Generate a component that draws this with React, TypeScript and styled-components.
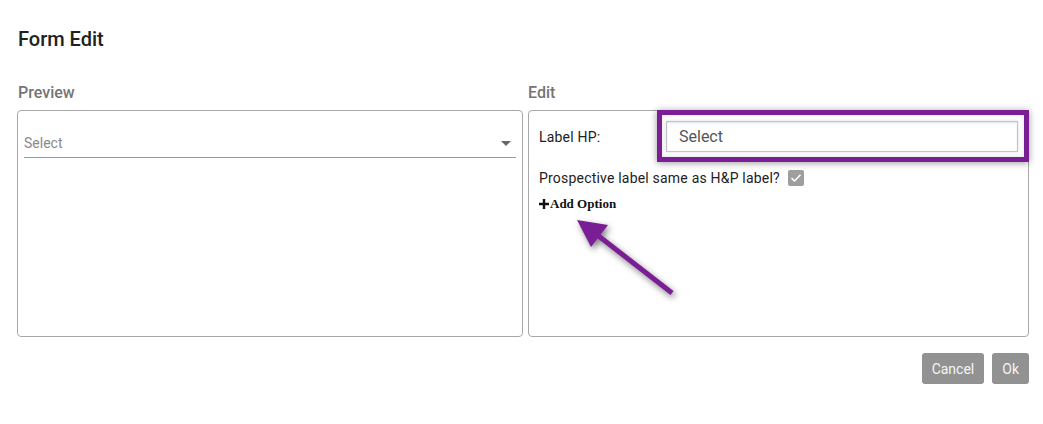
import React from "react";
import styled, { createGlobalStyle } from "styled-components";

const Global = createGlobalStyle`
  html, body { margin: 0; padding: 0; background: #fff; }
  body { font-family: Roboto, "Liberation Sans", Arial, sans-serif; color: #212121; }
  * { box-sizing: border-box; }
`;

const Page = styled.div`
  width: 1043px;
  padding: 27px 14px 0 17px;
`;

const Title = styled.h1`
  margin: 0 0 0 1px;
  font-size: 20px;
  line-height: 24px;
  font-weight: 500;
  color: #212121;
`;

const Columns = styled.div`
  display: grid;
  grid-template-columns: 506px 501px;
  column-gap: 5px;
  margin-top: 32px;
`;

const Column = styled.section`
  display: flex;
  flex-direction: column;
`;

const ColumnLabel = styled.div`
  font-size: 16px;
  line-height: 19px;
  font-weight: 500;
  color: #757575;
  margin-bottom: 8px;
`;

const PreviewLabel = styled(ColumnLabel)`
  padding-left: 1px;
`;

const Panel = styled.div`
  position: relative;
  height: 227px;
  border: 1px solid #a8a8a8;
  border-radius: 4px;
`;

const PreviewPanel = styled(Panel)`
  padding: 0 6px;
`;

const SelectField = styled.div`
  margin-top: 18px;
  height: 29px;
  display: flex;
  align-items: center;
  justify-content: space-between;
  border-bottom: 1px solid #9a9a9a;
  padding: 0 5px 1px 0;
  font-size: 14px;
  color: #8a8a8a;
`;

const Caret = styled.span`
  width: 0;
  height: 0;
  border-left: 5px solid transparent;
  border-right: 5px solid transparent;
  border-top: 5px solid #666;
  margin-top: 2px;
`;

const EditPanel = styled(Panel)`
  padding: 10px 10px 0 10px;
`;

const FieldRow = styled.div`
  display: flex;
  align-items: center;
`;

const FieldLabel = styled.label`
  flex: 0 0 118px;
  font-size: 14px;
  letter-spacing: 0.2px;
  color: #212121;
`;

const Highlight = styled.div`
  flex: 1;
  margin: -11px -11px -10px 0;
  padding: 6px 6px 5px 4px;
  border: 5px solid #7a1e95;
  background: #fdfdfd;
  box-shadow: 0 1px 7px rgba(0, 0, 0, 0.4), inset 0 0 4px rgba(0, 0, 0, 0.12);
`;

const TextInput = styled.div`
  height: 31px;
  display: flex;
  align-items: center;
  padding-left: 12px;
  font-size: 16px;
  color: #555;
  background: #fff;
  border: 1px solid #c4c4c4;
  box-shadow: inset 0 1px 2px rgba(0, 0, 0, 0.12), 0 0 3px rgba(0, 0, 0, 0.12);
`;

const CheckRow = styled.div`
  margin-top: 16px;
  display: flex;
  align-items: center;
  gap: 8px;
  font-size: 14px;
  letter-spacing: 0.2px;
  line-height: 20px;
  color: #212121;
`;

const CheckBox = styled.span`
  width: 16px;
  height: 16px;
  border-radius: 2px;
  background: #9e9e9e;
  display: inline-flex;
  align-items: center;
  justify-content: center;
`;

const AddOption = styled.div`
  margin-top: 8px;
  display: flex;
  align-items: center;
  gap: 1px;
  font-family: "Liberation Serif", "Times New Roman", serif;
  font-weight: bold;
  font-size: 13px;
  line-height: 16px;
  color: #111;
`;

const ArrowOverlay = styled.svg`
  position: absolute;
  left: 31px;
  top: 99px;
  overflow: visible;
  filter: drop-shadow(2px 3px 3px rgba(0, 0, 0, 0.5));
`;

const Actions = styled.div`
  display: flex;
  justify-content: flex-end;
  gap: 8px;
  margin-top: 16px;
`;

const Button = styled.button<{ $pad?: number }>`
  height: 31px;
  padding: 0 ${(p) => p.$pad ?? 10}px;
  border: none;
  border-radius: 3px;
  background: #929292;
  color: #f5f5f5;
  font-family: Roboto, "Liberation Sans", Arial, sans-serif;
  font-size: 14px;
`;

export default function App() {
  return (
    <>
      <Global />
      <Page>
        <Title>Form Edit</Title>
        <Columns>
          <Column>
            <PreviewLabel>Preview</PreviewLabel>
            <PreviewPanel>
              <SelectField>
                <span>Select</span>
                <Caret />
              </SelectField>
            </PreviewPanel>
          </Column>
          <Column>
            <ColumnLabel>Edit</ColumnLabel>
            <EditPanel>
              <FieldRow>
                <FieldLabel>Label HP:</FieldLabel>
                <Highlight>
                  <TextInput>Select</TextInput>
                </Highlight>
              </FieldRow>
              <CheckRow>
                <span>Prospective label same as H&amp;P label?</span>
                <CheckBox>
                  <svg width="12" height="10" viewBox="0 0 12 10">
                    <path d="M1.5 5.2 L4.5 8 L10.5 1.8" fill="none" stroke="#fff" strokeWidth="1.6" />
                  </svg>
                </CheckBox>
              </CheckRow>
              <AddOption>
                <svg width="10" height="10" viewBox="0 0 10 10">
                  <path d="M3.8 0 H6.2 V3.8 H10 V6.2 H6.2 V10 H3.8 V6.2 H0 V3.8 H3.8 Z" fill="#111" />
                </svg>
                <span>Add Option</span>
              </AddOption>
              <ArrowOverlay width="130" height="100" viewBox="0 0 130 100">
                <line x1="36" y1="24" x2="112" y2="83" stroke="#7a1e95" strokeWidth="5" strokeLinecap="butt" />
                <polygon points="17,10 48,15 31,37" fill="#7a1e95" />
              </ArrowOverlay>
            </EditPanel>
          </Column>
        </Columns>
        <Actions>
          <Button $pad={10}>Cancel</Button>
          <Button $pad={10}>Ok</Button>
        </Actions>
      </Page>
    </>
  );
}
